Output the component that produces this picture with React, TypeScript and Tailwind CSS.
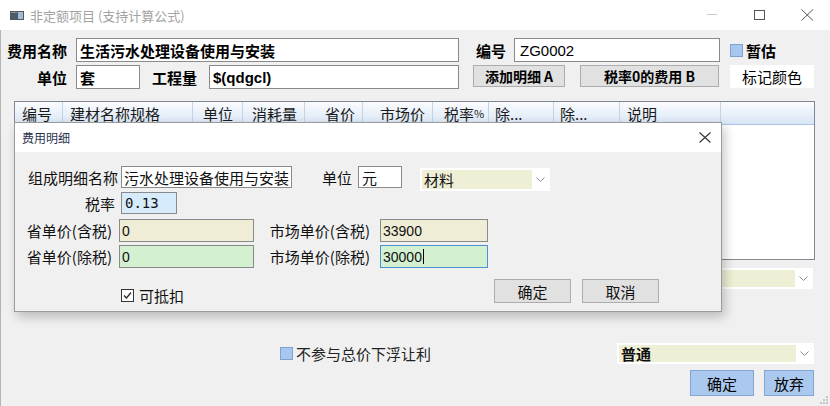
import React from "react";

const cjk = "font-['Noto_Sans_CJK_SC','Liberation_Sans',sans-serif]";
const latin = "font-['Liberation_Sans','Noto_Sans_CJK_SC',sans-serif]";

const Chevron = () => (
  <svg width="9" height="5" viewBox="0 0 9 5">
    <path d="M0.5 0.5 L4.5 4.5 L8.5 0.5" fill="none" stroke="#8a8a8a" strokeWidth="1" />
  </svg>
);

const Combo: React.FC<{ text?: string; bold?: boolean; className?: string }> = ({
  text,
  bold,
  className,
}) => (
  <div className={`flex border border-white bg-white p-[1px] ${className ?? ""}`}>
    <div
      className={`flex flex-1 items-center bg-[#efefd6] pl-[2px] text-[15px] leading-none text-[#111] ${
        bold ? "font-bold" : ""
      }`}
    >
      {text}
    </div>
    <div className="flex w-[16px] items-center justify-center bg-white">
      <Chevron />
    </div>
  </div>
);

const BlueBox = () => (
  <span className="inline-block h-[13px] w-[13px] border border-[#7fa2d5] bg-[#a9c6ee]" />
);

export default function App() {
  return (
    <div className={`relative h-[406px] w-[830px] overflow-hidden bg-[#f0f0f0] ${cjk}`}>
      {/* title bar */}
      <div className="flex h-[30px] items-center bg-white">
        <svg className="ml-[10px]" width="14" height="9" viewBox="0 0 14 9">
          <rect x="0" y="0" width="14" height="9" fill="#4f5a66" />
          <rect x="8" y="1" width="5" height="7" fill="#9fbcd3" />
          <rect x="1" y="1" width="6" height="1" fill="#8b959e" />
        </svg>
        <span className="ml-[6px] text-[13px] leading-none text-[#a3a3a3]">
          非定额项目 (支持计算公式)
        </span>
        <div className="ml-auto flex items-center">
          <svg width="10" height="2" viewBox="0 0 10 2" className="mr-[37px]">
            <rect x="0" y="0" width="10" height="1" fill="#c8c8c8" />
          </svg>
          <svg width="12" height="11" viewBox="0 0 12 11" className="mr-[35px]">
            <rect x="0.5" y="0.5" width="10" height="9" fill="none" stroke="#555" />
          </svg>
          <svg width="13" height="12" viewBox="0 0 13 12" className="mr-[16px]">
            <path d="M0.5 0.5 L12 11.5 M12 0.5 L0.5 11.5" stroke="#555" strokeWidth="1" />
          </svg>
        </div>
      </div>

      {/* main body */}
      <div className="flex h-[376px] flex-col border-l border-[#b4b4b4]">
        <div className="mt-[8px] flex h-[24px] items-center">
          <div className="w-[75px] pr-[9px] text-right text-[15px] font-bold leading-none">费用名称</div>
          <div className="flex h-[24px] w-[383px] items-center border border-[#8a8a8a] bg-white pl-[3px] text-[15px] font-bold leading-none">
            生活污水处理设备使用与安装
          </div>
          <div className="w-[55px] pl-[17px] text-[15px] font-bold leading-none">编号</div>
          <div className={`flex h-[24px] w-[206px] items-center border border-[#8a8a8a] bg-white pl-[5px] text-[15px] leading-none ${latin}`}>
            ZG0002
          </div>
          <div className="ml-[10px] flex items-center">
            <BlueBox />
            <span className="ml-[3px] text-[15px] font-bold leading-none">暂估</span>
          </div>
        </div>

        <div className="mt-[3px] flex h-[24px] items-start">
          <div className="flex h-[24px] w-[75px] items-center justify-end pr-[9px] text-[15px] font-bold leading-none">单位</div>
          <div className="flex h-[24px] w-[64px] items-center border border-[#8a8a8a] bg-white pl-[3px] text-[15px] font-bold leading-none">
            套
          </div>
          <div className="flex h-[24px] w-[69px] items-center pl-[12px] text-[15px] font-bold leading-none">工程量</div>
          <div className={`flex h-[24px] w-[250px] items-center border border-[#8a8a8a] bg-white pl-[3px] text-[15px] font-bold leading-none ${latin}`}>
            $(qdgcl)
          </div>
          <button className="ml-[14px] h-[22px] w-[92px] border border-[#adadad] bg-[#e1e1e1] text-[14px] font-bold leading-none">
            添加明细 A
          </button>
          <button className="ml-[15px] h-[22px] w-[139px] border border-[#adadad] bg-[#e1e1e1] text-[14px] font-bold leading-none">
            税率0的费用 B
          </button>
          <div className="ml-[11px] flex h-[23px] w-[84px] items-center justify-center bg-white text-[15px] leading-none">
            标记颜色
          </div>
        </div>

        {/* table */}
        <div className="ml-[13px] mt-[12px] h-[159px] w-[801px] border border-[#828790] bg-white">
          <div className="flex h-[23px] border-b border-[#a9c4e6] bg-linear-to-b from-[#fbfcfe] to-[#d9e6f5] text-[15px] leading-none text-[#1a1a1a]">
            <div className="flex w-[48px] items-center border-r border-[#c3d3e6] pl-[7px]">编号</div>
            <div className="flex w-[130px] items-center border-r border-[#c3d3e6] pl-[7px]">建材名称规格</div>
            <div className="flex w-[50px] items-center border-r border-[#c3d3e6] pl-[10px]">单位</div>
            <div className="flex w-[62px] items-center border-r border-[#c3d3e6] pl-[9px]">消耗量</div>
            <div className="flex w-[58px] items-center justify-end border-r border-[#c3d3e6] pr-[7px]">省价</div>
            <div className="flex w-[70px] items-center justify-end border-r border-[#c3d3e6] pr-[7px]">市场价</div>
            <div className="flex w-[56px] items-center border-r border-[#c3d3e6] pl-[11px]">
              税率<span className="text-[11px]">%</span>
            </div>
            <div className="flex w-[65px] items-center border-r border-[#c3d3e6] pl-[6px]">除...</div>
            <div className="flex w-[66px] items-center border-r border-[#c3d3e6] pl-[6px]">除...</div>
            <div className="flex w-[101px] items-center border-r border-[#c3d3e6] pl-[7px]">说明</div>
            <div className="flex-1" />
          </div>
        </div>

        <div className="mt-[8px] flex justify-end pr-[17px]">
          <Combo className="h-[21px] w-[196px]" />
        </div>

        <div className="mt-[54px] flex h-[21px] items-center">
          <div className="ml-[279px] flex items-center">
            <BlueBox />
            <span className="ml-[3px] text-[15px] leading-none text-[#222]">不参与总价下浮让利</span>
          </div>
          <Combo text="普通" bold className="ml-auto mr-[16px] h-[21px] w-[197px]" />
        </div>

        <div className="mt-[6px] flex justify-end gap-[10px] pr-[16px]">
          <button className="h-[26px] w-[64px] border border-[#7fa6d6] bg-[#abc9ef] text-[15px] leading-none">确定</button>
          <button className="h-[26px] w-[50px] border border-[#7fa6d6] bg-[#abc9ef] text-[15px] leading-none">放弃</button>
        </div>
      </div>

      {/* size grip */}
      <svg className="absolute bottom-[1px] right-[1px]" width="10" height="10" viewBox="0 0 10 10">
        <rect x="7" y="1" width="2" height="2" fill="#c4c4c4" />
        <rect x="4" y="4" width="2" height="2" fill="#c4c4c4" />
        <rect x="7" y="4" width="2" height="2" fill="#c4c4c4" />
        <rect x="1" y="7" width="2" height="2" fill="#c4c4c4" />
        <rect x="4" y="7" width="2" height="2" fill="#c4c4c4" />
        <rect x="7" y="7" width="2" height="2" fill="#c4c4c4" />
      </svg>

      {/* 费用明细 dialog */}
      <div className="absolute left-[14px] top-[122px] flex h-[190px] w-[708px] flex-col border border-[#9a9a9a] bg-[#f0f0f0] shadow-[3px_5px_10px_rgba(0,0,0,0.22)]">
        <div className="flex h-[29px] items-center bg-white">
          <span className="pl-[7px] text-[12px] leading-none text-[#2a3450]">费用明细</span>
          <svg className="ml-auto mr-[10px]" width="12" height="11" viewBox="0 0 12 11">
            <path d="M0.5 0.5 L11.5 10.5 M11.5 0.5 L0.5 10.5" stroke="#333" strokeWidth="1.1" />
          </svg>
        </div>

        <div className="mt-[14px] flex h-[22px] items-start text-[15px] leading-none text-[#111]">
          <div className="flex h-[22px] w-[106px] items-center justify-end pr-[3px]">组成明细名称</div>
          <div className="flex h-[22px] w-[171px] items-center border border-[#8a8a8a] bg-white pl-[2px]">
            污水处理设备使用与安装
          </div>
          <div className="flex h-[22px] w-[66px] items-center justify-end pr-[6px]">单位</div>
          <div className="flex h-[22px] w-[44px] items-center border border-[#8a8a8a] bg-white pl-[3px]">元</div>
          <Combo text="材料" className="ml-[18px] mt-[2px] h-[23px] w-[130px]" />
        </div>

        <div className="mt-[4px] flex h-[22px] items-center text-[15px] leading-none text-[#111]">
          <div className="w-[106px] pr-[6px] text-right">税率</div>
          <div className="flex h-[22px] w-[56px] items-center border border-[#8a8a8a] bg-[#d6ebfc] pl-[3px] font-['DejaVu_Sans_Mono',monospace] text-[14px]">
            0.13
          </div>
        </div>

        <div className="mt-[5px] flex h-[23px] items-center text-[15px] leading-none text-[#111]">
          <div className="w-[104px] pr-[7px] text-right">省单价(含税)</div>
          <div className={`flex h-[23px] w-[135px] items-center border border-[#8a8a8a] bg-[#efedd5] pl-[2px] text-[14px] ${latin}`}>0</div>
          <div className="w-[126px] pr-[10px] text-right">市场单价(含税)</div>
          <div className={`flex h-[23px] w-[108px] items-center border border-[#8a8a8a] bg-[#efedd5] pl-[2px] text-[14px] ${latin}`}>33900</div>
        </div>

        <div className="mt-[3px] flex h-[23px] items-center text-[15px] leading-none text-[#111]">
          <div className="w-[104px] pr-[7px] text-right">省单价(除税)</div>
          <div className={`flex h-[23px] w-[135px] items-center border border-[#8a8a8a] bg-[#d3f0d0] pl-[2px] text-[14px] ${latin}`}>0</div>
          <div className="w-[126px] pr-[10px] text-right">市场单价(除税)</div>
          <div className={`flex h-[23px] w-[108px] items-center border border-[#4a90d9] bg-[#d3f0d0] pl-[2px] text-[14px] ${latin}`}>
            30000<span className="ml-[1px] inline-block h-[15px] w-[1px] bg-black" />
          </div>
        </div>

        <div className="mt-[11px] flex items-start text-[15px] leading-none text-[#111]">
          <div className="ml-[106px] mt-[9px] flex items-center">
            <svg width="13" height="13" viewBox="0 0 13 13">
              <rect x="0.5" y="0.5" width="12" height="12" fill="#fff" stroke="#333" />
              <path d="M3 6.5 L5.5 9 L10 3.5" fill="none" stroke="#222" strokeWidth="1.2" />
            </svg>
            <span className="ml-[5px]">可抵扣</span>
          </div>
          <button className="ml-[310px] h-[24px] w-[77px] border border-[#adadad] bg-[#e1e1e1] text-[15px] leading-none">
            确定
          </button>
          <button className="ml-[11px] h-[24px] w-[77px] border border-[#adadad] bg-[#e1e1e1] text-[15px] leading-none">
            取消
          </button>
        </div>
      </div>
    </div>
  );
}
